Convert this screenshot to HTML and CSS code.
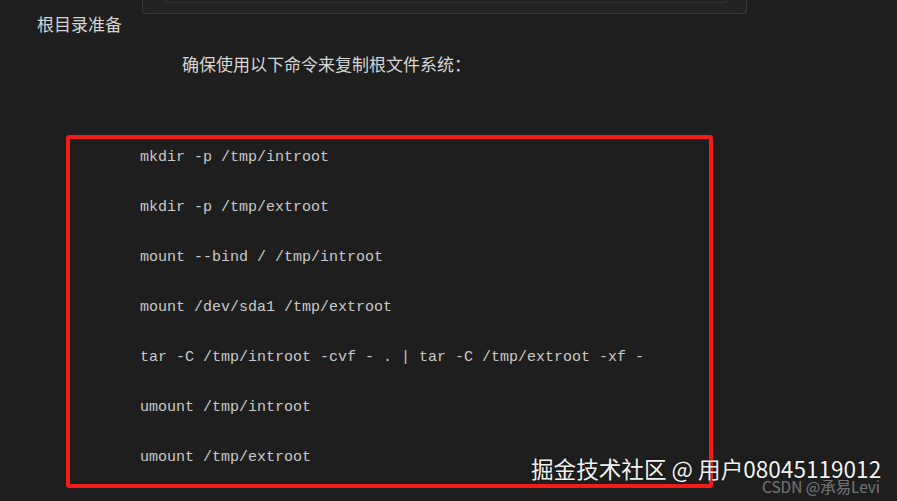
FILE: index.html
```html
<!DOCTYPE html>
<html lang="zh-CN">
<head>
<meta charset="utf-8">
<link rel="stylesheet" href="styles.css">
</head>
<body>
<div class="page">
  <div class="topbox"><div class="topinner"></div></div>
  <h3 class="heading">根目录准备</h3>
  <p class="intro">确保使用以下命令来复制根文件系统：</p>
  <div class="codebox">
    <p class="line">mkdir -p /tmp/introot</p>
    <p class="line">mkdir -p /tmp/extroot</p>
    <p class="line">mount --bind / /tmp/introot</p>
    <p class="line">mount /dev/sda1 /tmp/extroot</p>
    <p class="line">tar -C /tmp/introot -cvf - . | tar -C /tmp/extroot -xf -</p>
    <p class="line">umount /tmp/introot</p>
    <p class="line">umount /tmp/extroot</p>
  </div>
  <div class="wm-main">掘金技术社区 @ 用户08045119012</div>
  <div class="wm-sub">CSDN @承易Levi</div>
</div>
</body>
</html>
```

FILE: styles.css
```css
html, body {
  margin: 0;
  padding: 0;
  background: #1e1e1e;
}
.page {
  position: relative;
  width: 897px;
  height: 501px;
  overflow: hidden;
  font-family: "Noto Sans CJK SC", "Noto Sans", sans-serif;
}
.topbox {
  margin-left: 142px;
  width: 603px;
  height: 13px;
  background: #232323;
  border: 1px solid #383838;
  border-top: none;
  border-radius: 0 0 4px 4px;
}
.topinner {
  margin-left: 21px;
  width: 562px;
  height: 2px;
  border-bottom: 1px solid #333;
  border-right: 1px solid #333;
  border-left: 1px solid #333;
  border-radius: 0 0 3px 3px;
}
.heading {
  margin: 0;
  padding-left: 37px;
  font-size: 17px;
  font-weight: normal;
  line-height: 20px;
  color: #d6d6d6;
}
.intro {
  margin: 20px 0 0;
  padding-left: 182px;
  font-size: 17px;
  line-height: 20px;
  color: #d6d6d6;
}
.codebox {
  margin: 61px 0 0 66px;
  border: 4px solid #f41c17;
  border-radius: 3px;
  padding: 9px 0 0 70px;
  display: flex;
  flex-direction: column;
  gap: 30px;
  width: 569px;
  height: 336px;
}
.line {
  margin: 0;
  font-family: "Liberation Mono", monospace;
  font-size: 15px;
  line-height: 20px;
  color: #c9c9c9;
  white-space: pre;
}
.wm-main {
  position: absolute;
  left: 531px;
  top: 454px;
  font-size: 22.6px;
  line-height: 30px;
  color: #f2f2f2;
  text-shadow: 0 0 2px rgba(0,0,0,0.6);
  white-space: nowrap;
}
.wm-sub {
  position: absolute;
  left: 762px;
  top: 476px;
  font-size: 15.4px;
  line-height: 20px;
  color: rgba(255,255,255,0.4);
  white-space: nowrap;
}
```
